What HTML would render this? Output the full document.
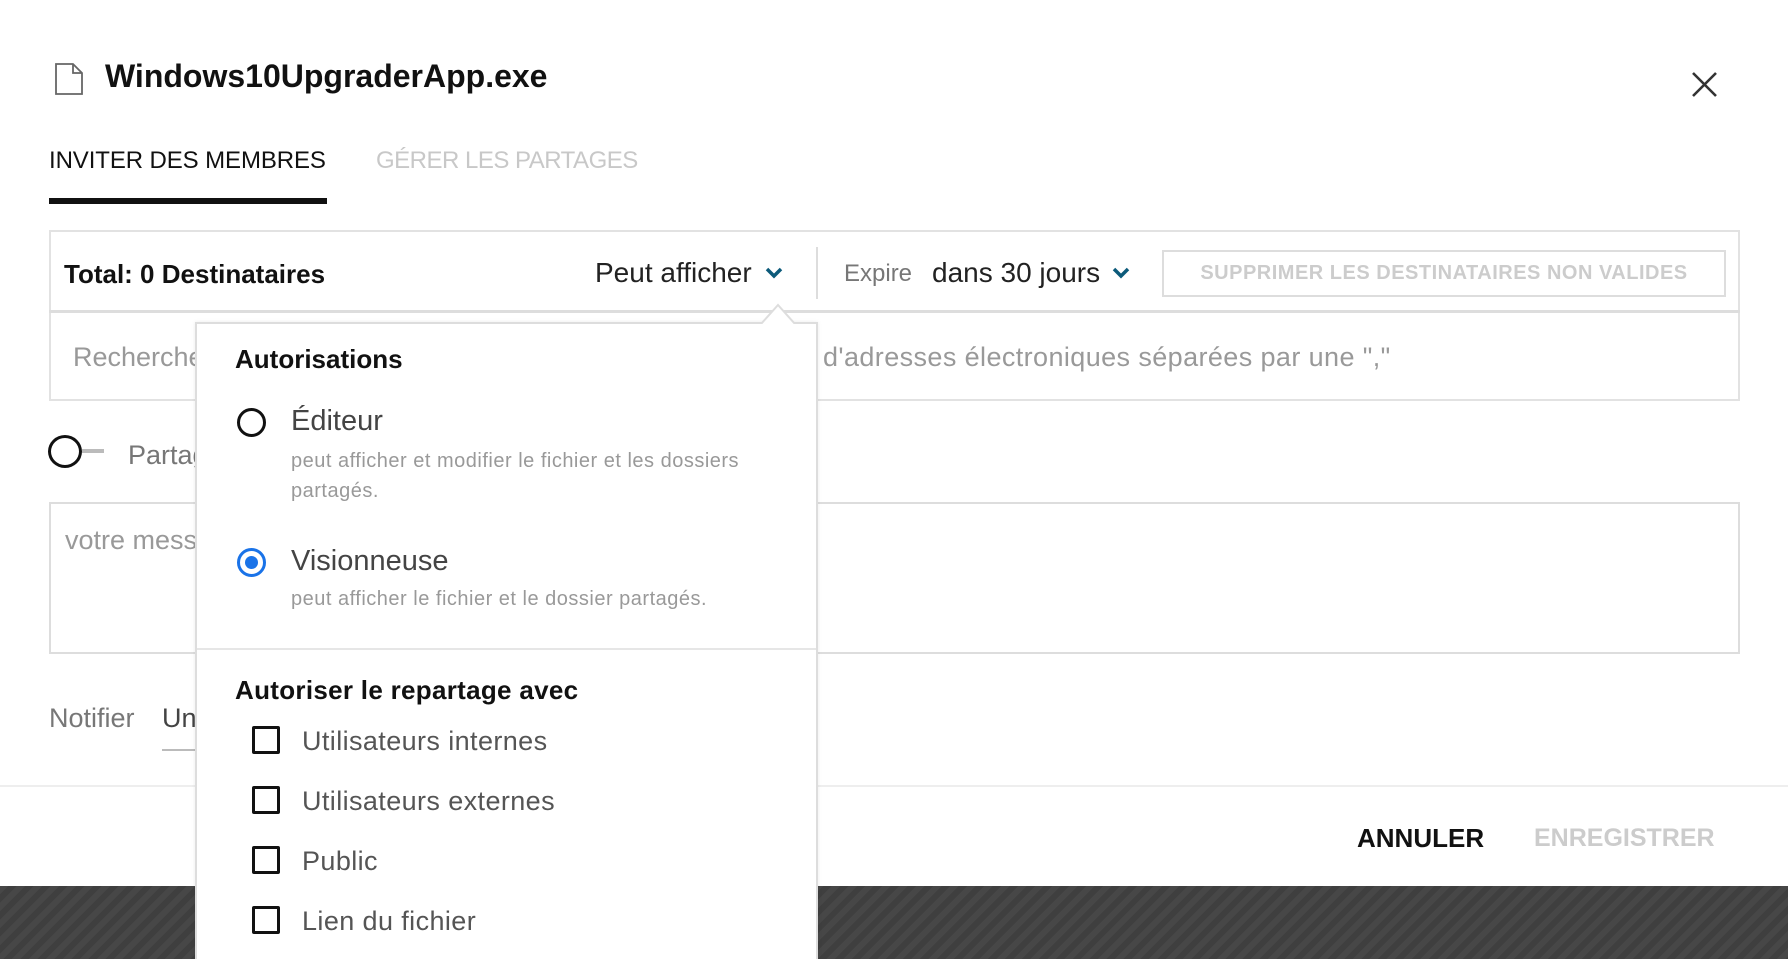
<!DOCTYPE html>
<html><head><meta charset="utf-8"><style>
*{margin:0;padding:0;box-sizing:border-box}
html,body{width:1788px;height:959px;overflow:hidden}
body{background:#fff;font-family:"Liberation Sans",sans-serif;position:relative;color:#222}
.a{position:absolute;white-space:nowrap}
.b{font-weight:bold}
.g{color:#777}
.lg{color:#999}
.band{position:absolute;left:0;top:886px;width:1788px;height:73px;background:repeating-linear-gradient(135deg,#474747 0 6px,#3f3f3f 6px 12px)}
.cb{position:absolute;left:252px;width:28px;height:28px;border:3px solid #111;border-radius:2px}
.cl{left:302px;font-size:27px;color:#555;letter-spacing:0.4px}
</style></head><body>
<svg class="a" style="left:54px;top:63px" width="30" height="32" viewBox="0 0 30 32"><path d="M2 1H19L28 10V31H2Z M19 1V10H28" fill="none" stroke="#666" stroke-width="1.8"/></svg>
<div class="a b" style="left:105px;top:58px;font-size:32px;color:#111">Windows10UpgraderApp.exe</div>
<svg class="a" style="left:1691px;top:71px" width="27" height="27" viewBox="0 0 27 27"><path d="M2 2L25 25M25 2L2 25" stroke="#333" stroke-width="2.6"/></svg>
<div class="a" style="left:49px;top:147px;font-size:24px;color:#111;letter-spacing:-0.1px">INVITER DES MEMBRES</div>
<div class="a" style="left:376px;top:147px;font-size:24px;color:#c8c8c8;letter-spacing:-0.5px">GÉRER LES PARTAGES</div>
<div class="a" style="left:49px;top:198px;width:278px;height:6px;background:#111"></div>
<div class="a" style="left:49px;top:230px;width:1691px;height:171px;border:2px solid #e2e2e2"></div>
<div class="a" style="left:49px;top:310px;width:1691px;height:3px;background:#ddd"></div>
<div class="a b" style="left:64px;top:259px;font-size:26px;color:#111">Total: 0 Destinataires</div>
<div class="a" style="left:595px;top:257px;font-size:28px;color:#222">Peut afficher</div>
<svg class="a" style="left:765px;top:266px" width="18" height="14" viewBox="0 0 18 14"><path d="M2 3L9 10L16 3" fill="none" stroke="#0c5a7a" stroke-width="3.5"/></svg>
<div class="a" style="left:816px;top:247px;width:2px;height:52px;background:#ddd"></div>
<div class="a g" style="left:844px;top:260px;font-size:24px">Expire</div>
<div class="a" style="left:932px;top:257px;font-size:28px;color:#222">dans 30 jours</div>
<svg class="a" style="left:1112px;top:266px" width="18" height="14" viewBox="0 0 18 14"><path d="M2 3L9 10L16 3" fill="none" stroke="#0c5a7a" stroke-width="3.5"/></svg>
<div class="a b" style="left:1162px;top:250px;width:564px;height:47px;border:2px solid #ddd;font-size:20px;color:#ccc;text-align:center;line-height:43px;letter-spacing:0.5px">SUPPRIMER LES DESTINATAIRES NON VALIDES</div>
<div class="a lg" style="left:73px;top:342px;font-size:27px">Recherche</div>
<div class="a lg" style="left:823px;top:342px;font-size:27px;letter-spacing:0.4px">d'adresses électroniques séparées par une ","</div>
<div class="a" style="left:48px;top:435px;width:34px;height:33px;border:3px solid #111;border-radius:50%"></div>
<div class="a" style="left:82px;top:449px;width:22px;height:4px;background:#bbb"></div>
<div class="a g" style="left:128px;top:440px;font-size:27px">Partager</div>
<div class="a" style="left:49px;top:502px;width:1691px;height:152px;border:2px solid #ddd"></div>
<div class="a lg" style="left:65px;top:525px;font-size:27px">votre message</div>
<div class="a g" style="left:49px;top:703px;font-size:27px">Notifier</div>
<div class="a" style="left:162px;top:703px;font-size:27px;color:#444">Un</div>
<div class="a" style="left:162px;top:749px;width:40px;height:2px;background:#bbb"></div>
<div class="a" style="left:0;top:785px;width:1788px;height:2px;background:#eee"></div>
<div class="a b" style="left:1357px;top:823px;font-size:26px;color:#111">ANNULER</div>
<div class="a b" style="left:1534px;top:824px;font-size:25px;color:#ccc">ENREGISTRER</div>
<div class="band"></div>
<div class="a" style="left:195px;top:322px;width:623px;height:637px;background:#fff;border:2px solid #ddd;border-bottom:none;box-shadow:0 0 4px rgba(0,0,0,.08)"></div>
<svg class="a" style="left:761px;top:302px" width="34" height="22" viewBox="0 0 34 22"><path d="M0 22L17 3L34 22" fill="#fff" stroke="#ddd" stroke-width="2"/></svg>
<div class="a b" style="left:235px;top:344px;font-size:26px;color:#111">Autorisations</div>
<div class="a" style="left:237px;top:408px;width:29px;height:29px;border:3px solid #111;border-radius:50%"></div>
<div class="a" style="left:291px;top:405px;font-size:29px;color:#444">Éditeur</div>
<div class="a lg" style="left:291px;top:450px;font-size:20px;letter-spacing:0.5px">peut afficher et modifier le fichier et les dossiers</div>
<div class="a lg" style="left:291px;top:480px;font-size:20px;letter-spacing:0.5px">partagés.</div>
<div class="a" style="left:237px;top:548px;width:29px;height:29px;border:3px solid #1a73e8;border-radius:50%"><div style="position:absolute;left:5px;top:5px;width:13px;height:13px;border-radius:50%;background:#1a73e8"></div></div>
<div class="a" style="left:291px;top:545px;font-size:29px;color:#444">Visionneuse</div>
<div class="a lg" style="left:291px;top:588px;font-size:20px;letter-spacing:0.5px">peut afficher le fichier et le dossier partagés.</div>
<div class="a" style="left:197px;top:648px;width:619px;height:2px;background:#e6e6e6"></div>
<div class="a b" style="left:235px;top:675px;font-size:26px;color:#111;letter-spacing:0.3px">Autoriser le repartage avec</div>
<div class="cb" style="top:726px"></div><div class="a cl" style="top:726px">Utilisateurs internes</div>
<div class="cb" style="top:786px"></div><div class="a cl" style="top:786px">Utilisateurs externes</div>
<div class="cb" style="top:846px"></div><div class="a cl" style="top:846px">Public</div>
<div class="cb" style="top:906px"></div><div class="a cl" style="top:906px">Lien du fichier</div>
</body></html>
